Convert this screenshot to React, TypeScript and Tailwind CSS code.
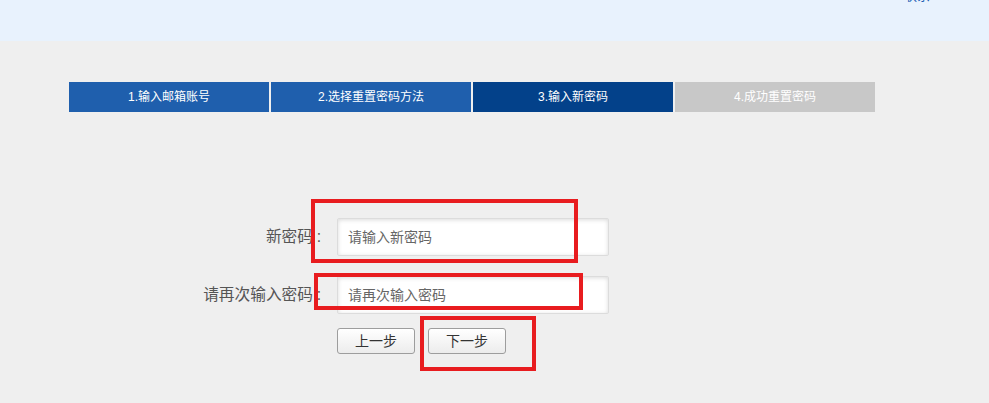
const font = "font-['Liberation_Sans','Noto_Sans_CJK_SC',sans-serif]";

const steps = [
  { label: "1.输入邮箱账号", cls: "bg-[#1f5fad]" },
  { label: "2.选择重置密码方法", cls: "bg-[#1f5fad]" },
  { label: "3.输入新密码", cls: "bg-[#03418a]" },
  { label: "4.成功重置密码", cls: "bg-[#c8c8c8]" },
];

const Field = ({ label, placeholder }: { label: string; placeholder: string }) => (
  <div className="flex items-center h-[38px]">
    <label className="w-[325px] text-right text-[15.7px] text-[#555] whitespace-nowrap">
      {label}
      <span className="inline-block w-[12px] text-center">:</span>
    </label>
    <input
      type="password"
      placeholder={placeholder}
      className="ml-[12px] w-[272px] h-[38px] px-[10px] bg-white border border-[#dcdcdc] rounded-[2px] shadow-[inset_0_1px_4px_rgba(0,0,0,0.15)] text-[14px] placeholder:text-[#666] outline-none"
    />
  </div>
);

const Btn = ({ children }: { children: string }) => (
  <button className="w-[78px] h-[26px] text-[14px] text-[#333] bg-gradient-to-b from-white to-[#ececec] border border-[#9d9d9d] rounded-[3px]">
    {children}
  </button>
);

export default function App() {
  return (
    <div className={`relative w-[989px] h-[403px] overflow-hidden bg-[#efefef] ${font}`}>
      <header className="h-[41px] bg-[#e8f2fd] flex justify-end pr-[59px]">
        <span className="text-[13px] leading-[16px] text-[#1a5fb4] -mt-[12px]">联系</span>
      </header>

      <div className="flex gap-[2px] pl-[69px] mt-[41px]">
        {steps.map((s) => (
          <div
            key={s.label}
            className={`w-[200px] h-[30px] flex items-center justify-center text-white text-[12px] ${s.cls}`}
          >
            {s.label}
          </div>
        ))}
      </div>

      <form className="mt-[106px] flex flex-col gap-[20px]">
        <Field label="新密码" placeholder="请输入新密码" />
        <Field label="请再次输入密码" placeholder="请再次输入密码" />
        <div className="flex gap-[13px] pl-[337px] -mt-[6px]">
          <Btn>上一步</Btn>
          <Btn>下一步</Btn>
        </div>
      </form>

      {/* red annotation boxes */}
      <div className="absolute left-[311px] top-[199px] w-[267px] h-[64px] border-4 border-[#e81c1f]" />
      <div className="absolute left-[314px] top-[273px] w-[269px] h-[37px] border-4 border-[#e81c1f]" />
      <div className="absolute left-[420px] top-[316px] w-[116px] h-[55px] border-4 border-[#e81c1f]" />
    </div>
  );
}
